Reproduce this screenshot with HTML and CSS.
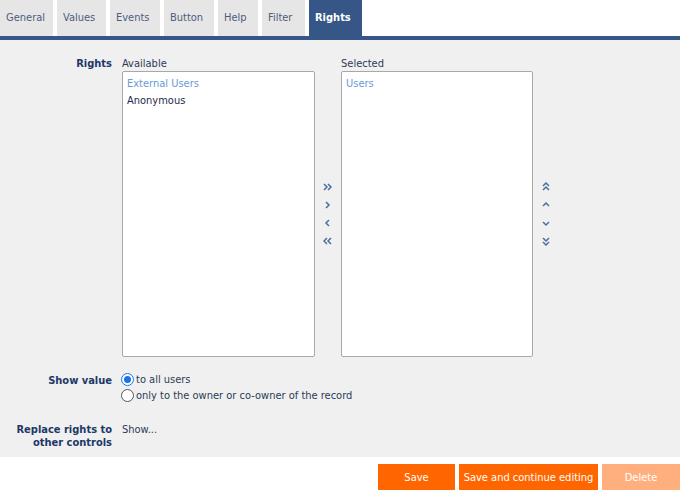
FILE: index.html
```html
<!DOCTYPE html>
<html>
<head>
<meta charset="utf-8">
<link rel="stylesheet" href="styles.css">
</head>
<body>
<div class="tabs">
  <div class="tab">General</div>
  <div class="tab">Values</div>
  <div class="tab">Events</div>
  <div class="tab">Button</div>
  <div class="tab">Help</div>
  <div class="tab">Filter</div>
  <div class="tab active">Rights</div>
</div>
<div class="content">
  <div class="row">
    <div class="label">Rights</div>
    <div class="picker">
      <div class="list-col">
        <div class="caption">Available</div>
        <div class="listbox">
          <div class="group">External Users</div>
          <div class="item">Anonymous</div>
        </div>
      </div>
      <div class="arrows">
        <svg width="10" height="10" viewBox="0 0 10 10"><polyline points="1,2 4,5 1,8" /><polyline points="5,2 8,5 5,8" /></svg>
        <svg width="10" height="10" viewBox="0 0 10 10"><polyline points="3,2 6,5 3,8" /></svg>
        <svg width="10" height="10" viewBox="0 0 10 10"><polyline points="6,2 3,5 6,8" /></svg>
        <svg width="10" height="10" viewBox="0 0 10 10"><polyline points="4,2 1,5 4,8" /><polyline points="8,2 5,5 8,8" /></svg>
      </div>
      <div class="list-col">
        <div class="caption">Selected</div>
        <div class="listbox narrow">
          <div class="group">Users</div>
        </div>
      </div>
      <div class="arrows">
        <svg width="10" height="10" viewBox="0 0 10 10"><polyline points="2,4 5,1 8,4" /><polyline points="2,8 5,5 8,8" /></svg>
        <svg width="10" height="10" viewBox="0 0 10 10"><polyline points="2,6 5,3 8,6" /></svg>
        <svg width="10" height="10" viewBox="0 0 10 10"><polyline points="2,4 5,7 8,4" /></svg>
        <svg width="10" height="10" viewBox="0 0 10 10"><polyline points="2,2 5,5 8,2" /><polyline points="2,6 5,9 8,6" /></svg>
      </div>
    </div>
  </div>
  <div class="row row-radio">
    <div class="label">Show value</div>
    <div class="radios">
      <label class="radio"><span class="dot checked"></span>to all users</label>
      <label class="radio"><span class="dot"></span>only to the owner or co-owner of the record</label>
    </div>
  </div>
  <div class="row row-replace">
    <div class="label">Replace rights to other controls</div>
    <div class="value">Show...</div>
  </div>
</div>
<div class="footer">
  <button class="btn">Save</button>
  <button class="btn wide">Save and continue editing</button>
  <button class="btn disabled">Delete</button>
</div>
</body>
</html>
```
FILE: styles.css
```css
* { box-sizing: border-box; }
html, body { margin: 0; padding: 0; background: #fff; }
body {
  font-family: "DejaVu Sans Condensed", "DejaVu Sans", sans-serif;
  font-stretch: condensed;
  font-size: 11px;
  color: #2c3b57;
  width: 680px;
  height: 492px;
  overflow: hidden;
}
.tabs {
  display: flex;
  gap: 4px;
  height: 40px;
  border-bottom: 4px solid #355687;
}
.tab {
  height: 36px;
  line-height: 36px;
  background: #e6e6e6;
  color: #4d5d7c;
  padding: 0 6px;
  font-size: 11px;
  white-space: nowrap;
}
.tab:nth-child(1) { width: 53px; }
.tab:nth-child(2) { width: 49px; }
.tab:nth-child(3) { width: 50px; }
.tab:nth-child(4) { width: 50px; }
.tab:nth-child(5) { width: 40px; }
.tab:nth-child(6) { width: 43px; }
.tab.active {
  width: 53px;
  background: #355687;
  color: #fff;
  font-weight: bold;
}
.content {
  background: #f0f0f0;
  height: 417px;
  padding-top: 17px;
}
.row {
  display: grid;
  grid-template-columns: 112px 1fr;
  column-gap: 10px;
}
.label {
  text-align: right;
  font-weight: bold;
  color: #1d3868;
  line-height: 13px;
}
.picker { display: flex; }
.list-col { display: flex; flex-direction: column; }
.caption { line-height: 13px; height: 14px; color: #2c3b57; }
.listbox {
  width: 193px;
  height: 286px;
  background: #fff;
  border: 1px solid #a8a8a8;
  border-radius: 2px;
  padding: 3px 4px;
  line-height: 17px;
}
.listbox.narrow { width: 192px; }
.group { color: #6b9ad6; }
.item { color: #1e2c4a; }
.arrows {
  width: 26px;
  padding-top: 14px;
  display: flex;
  flex-direction: column;
  align-items: center;
  justify-content: center;
  gap: 8px;
}
.arrows svg polyline {
  fill: none;
  stroke: #4a6ea5;
  stroke-width: 1.5;
}
.row-radio { margin-top: 16px; }
.radios { display: flex; flex-direction: column; gap: 3px; margin-left: -1px; }
.radio { display: flex; align-items: center; gap: 2px; height: 13px; }
.dot {
  width: 13px; height: 13px;
  border: 1px solid #555;
  border-radius: 50%;
  background: #fff;
  display: inline-block;
  position: relative;
}
.dot.checked { border-color: #1a73e8; }
.dot.checked::after {
  content: "";
  position: absolute;
  left: 2px; top: 2px;
  width: 7px; height: 7px;
  border-radius: 50%;
  background: #1a73e8;
}
.row-radio .label { padding-top: 1px; }
.row-replace { margin-top: 21px; }
.value { line-height: 13px; }
.footer {
  display: flex;
  justify-content: flex-end;
  gap: 4px;
  padding-top: 7px;
}
.btn {
  height: 26px;
  border: none;
  background: #ff6600;
  color: #fff;
  font-family: inherit;
  font-stretch: condensed;
  font-size: 11px;
  width: 77px;
  padding: 0;
  white-space: nowrap;
}
.btn.wide { width: 139px; }
.btn.disabled { background: #ffaf7d; width: 78px; }
```
